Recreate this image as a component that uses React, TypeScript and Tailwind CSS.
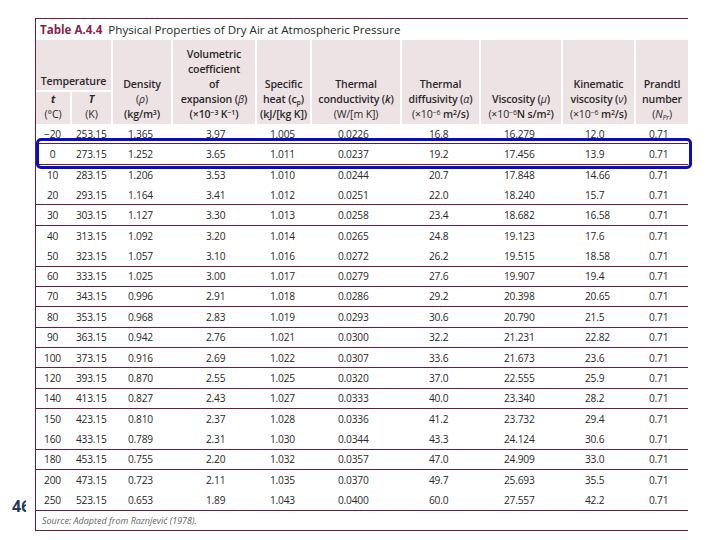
import React from "react";

const rows: [string, string, string, string, string, string, string, string, string, string, boolean][] = [
  ["\u221220", "253.15", "1.365", "3.97", "1.005", "0.0226", "16.8", "16.279", "12.0", "0.71", true],
  ["0", "273.15", "1.252", "3.65", "1.011", "0.0237", "19.2", "17.456", "13.9", "0.71", true],
  ["10", "283.15", "1.206", "3.53", "1.010", "0.0244", "20.7", "17.848", "14.66", "0.71", false],
  ["20", "293.15", "1.164", "3.41", "1.012", "0.0251", "22.0", "18.240", "15.7", "0.71", true],
  ["30", "303.15", "1.127", "3.30", "1.013", "0.0258", "23.4", "18.682", "16.58", "0.71", true],
  ["40", "313.15", "1.092", "3.20", "1.014", "0.0265", "24.8", "19.123", "17.6", "0.71", false],
  ["50", "323.15", "1.057", "3.10", "1.016", "0.0272", "26.2", "19.515", "18.58", "0.71", true],
  ["60", "333.15", "1.025", "3.00", "1.017", "0.0279", "27.6", "19.907", "19.4", "0.71", true],
  ["70", "343.15", "0.996", "2.91", "1.018", "0.0286", "29.2", "20.398", "20.65", "0.71", true],
  ["80", "353.15", "0.968", "2.83", "1.019", "0.0293", "30.6", "20.790", "21.5", "0.71", true],
  ["90", "363.15", "0.942", "2.76", "1.021", "0.0300", "32.2", "21.231", "22.82", "0.71", true],
  ["100", "373.15", "0.916", "2.69", "1.022", "0.0307", "33.6", "21.673", "23.6", "0.71", true],
  ["120", "393.15", "0.870", "2.55", "1.025", "0.0320", "37.0", "22.555", "25.9", "0.71", true],
  ["140", "413.15", "0.827", "2.43", "1.027", "0.0333", "40.0", "23.340", "28.2", "0.71", true],
  ["150", "423.15", "0.810", "2.37", "1.028", "0.0336", "41.2", "23.732", "29.4", "0.71", false],
  ["160", "433.15", "0.789", "2.31", "1.030", "0.0344", "43.3", "24.124", "30.6", "0.71", true],
  ["180", "453.15", "0.755", "2.20", "1.032", "0.0357", "47.0", "24.909", "33.0", "0.71", true],
  ["200", "473.15", "0.723", "2.11", "1.035", "0.0370", "49.7", "25.693", "35.5", "0.71", false],
  ["250", "523.15", "0.653", "1.89", "1.043", "0.0400", "60.0", "27.557", "42.2", "0.71", true],
];

const hc = "flex flex-col items-center justify-end pb-[2px] bg-[#eee3e4] border-r-2 border-white text-center shrink-0";

function Sup({ children }: { children: React.ReactNode }) {
  return <sup className="text-[7px]">{children}</sup>;
}

export default function App() {
  return (
    <div
      className="relative w-[720px] h-[540px] bg-white overflow-hidden text-[#2a2a2a]"
      style={{ fontFamily: '"Open Sans", "Noto Sans", sans-serif' }}
    >
      <div className="absolute left-[12px] top-[498px] text-[16px] font-bold text-[#1f3a60] leading-none">46</div>
      <div className="pt-[18px] pl-[26px]">
        <div className="relative z-10 bg-white pl-[9px] w-[662px]">
          <div className="border-t border-l border-b border-[#6d1c40] w-[653px]">
            {/* Title */}
            <div className="flex h-[21px] items-center pl-[4px] text-[11.6px] leading-none">
              <span className="font-bold text-[#8a1f4e]">Table A.4.4</span>
              <span className="ml-[6px] text-[#2a2a2a]">Physical Properties of Dry Air at Atmospheric Pressure</span>
            </div>
            {/* Header */}
            <div className="flex h-[84px] text-[10.6px] leading-[15px] font-semibold text-[#2a2a2a] tracking-[-0.15px]">
              <div className="flex flex-col w-[77px] border-r-2 border-white shrink-0">
                <div className="h-[50px] flex items-end justify-center pb-[1.5px] bg-[#eee3e4]">Temperature</div>
                <div className="h-[2px] bg-white" />
                <div className="flex h-[32px]">
                  <div className="w-[36px] flex flex-col items-center justify-end pb-[2px] bg-[#eee3e4] border-r-2 border-white">
                    <span className="italic font-bold">t</span>
                    <span className="font-normal">(°C)</span>
                  </div>
                  <div className="w-[39px] flex flex-col items-center justify-end pb-[2px] bg-[#eee3e4]">
                    <span className="italic font-bold">T</span>
                    <span className="font-normal">(K)</span>
                  </div>
                </div>
              </div>
              <div className={`${hc} w-[60px]`}>
                <span>Density</span>
                <span className="font-normal">(<span className="italic">ρ</span>)</span>
                <span>(kg/m<Sup>3</Sup>)</span>
              </div>
              <div className={`${hc} w-[84px]`}>
                <span>Volumetric</span>
                <span>coefficient</span>
                <span>of</span>
                <span>expansion (<span className="italic font-normal">β</span>)</span>
                <span>(×10<Sup>−3</Sup> K<Sup>−1</Sup>)</span>
              </div>
              <div className={`${hc} w-[55px]`}>
                <span>Specific</span>
                <span>heat (c<sub className="text-[7px]">p</sub>)</span>
                <span>(kJ/[kg K])</span>
              </div>
              <div className={`${hc} w-[90px]`}>
                <span>Thermal</span>
                <span>conductivity (<span className="italic">k</span>)</span>
                <span className="font-normal">(W/[m K])</span>
              </div>
              <div className={`${hc} w-[79px]`}>
                <span>Thermal</span>
                <span>diffusivity (<span className="italic font-normal">α</span>)</span>
                <span><span className="font-normal">(×10<Sup>−6</Sup></span> m<Sup>2</Sup>/s)</span>
              </div>
              <div className={`${hc} w-[82px]`}>
                <span>Viscosity (<span className="italic font-normal">μ</span>)</span>
                <span><span className="font-normal">(×10<Sup>−6</Sup></span>N s/m<Sup>2</Sup>)</span>
              </div>
              <div className={`${hc} w-[73px]`}>
                <span>Kinematic</span>
                <span>viscosity (<span className="italic font-normal">ν</span>)</span>
                <span><span className="font-normal">(×10<Sup>−6</Sup></span> m<Sup>2</Sup>/s)</span>
              </div>
              <div className="flex flex-col items-center justify-end pb-[2px] bg-[#eee3e4] text-center w-[52px] shrink-0">
                <span>Prandtl</span>
                <span>number</span>
                <span className="font-normal">(<span className="italic">N</span><sub className="text-[7px] italic">Pr</sub>)</span>
              </div>
            </div>
            {/* Data rows */}
            <div className="text-[10.2px] leading-none tracking-[-0.2px]">
              {rows.map((r, i) => (
                <div
                  key={i}
                  className={`flex items-center h-[20.37px] ${r[10] ? "border-b border-[#6d1c40]" : ""}`}
                >
                  <div className="w-[36px] shrink-0 text-center pr-[3px]">{r[0]}</div>
                  <div className="w-[41px] shrink-0 pl-[4px]">{r[1]}</div>
                  <div className="w-[60px] shrink-0 pl-[15px]">{r[2]}</div>
                  <div className="w-[84px] shrink-0 pl-[33px]">{r[3]}</div>
                  <div className="w-[55px] shrink-0 pl-[13px]">{r[4]}</div>
                  <div className="w-[90px] shrink-0 pl-[26px]">{r[5]}</div>
                  <div className="w-[79px] shrink-0 pl-[27px]">{r[6]}</div>
                  <div className="w-[82px] shrink-0 pl-[23px]">{r[7]}</div>
                  <div className="w-[73px] shrink-0 pl-[22px]">{r[8]}</div>
                  <div className="w-[52px] shrink-0 pl-[13px]">{r[9]}</div>
                </div>
              ))}
            </div>
            {/* Source */}
            <div className="flex items-center h-[19px] pl-[6px] text-[9px] italic text-[#666]">
              Source: Adapted from Raznjević (1978).
            </div>
          </div>
        </div>
      </div>
      <div className="absolute z-20 left-[36px] top-[138px] w-[656px] h-[31px] border-[3px] border-[#0b0bc4] rounded-[5px]" />
    </div>
  );
}
